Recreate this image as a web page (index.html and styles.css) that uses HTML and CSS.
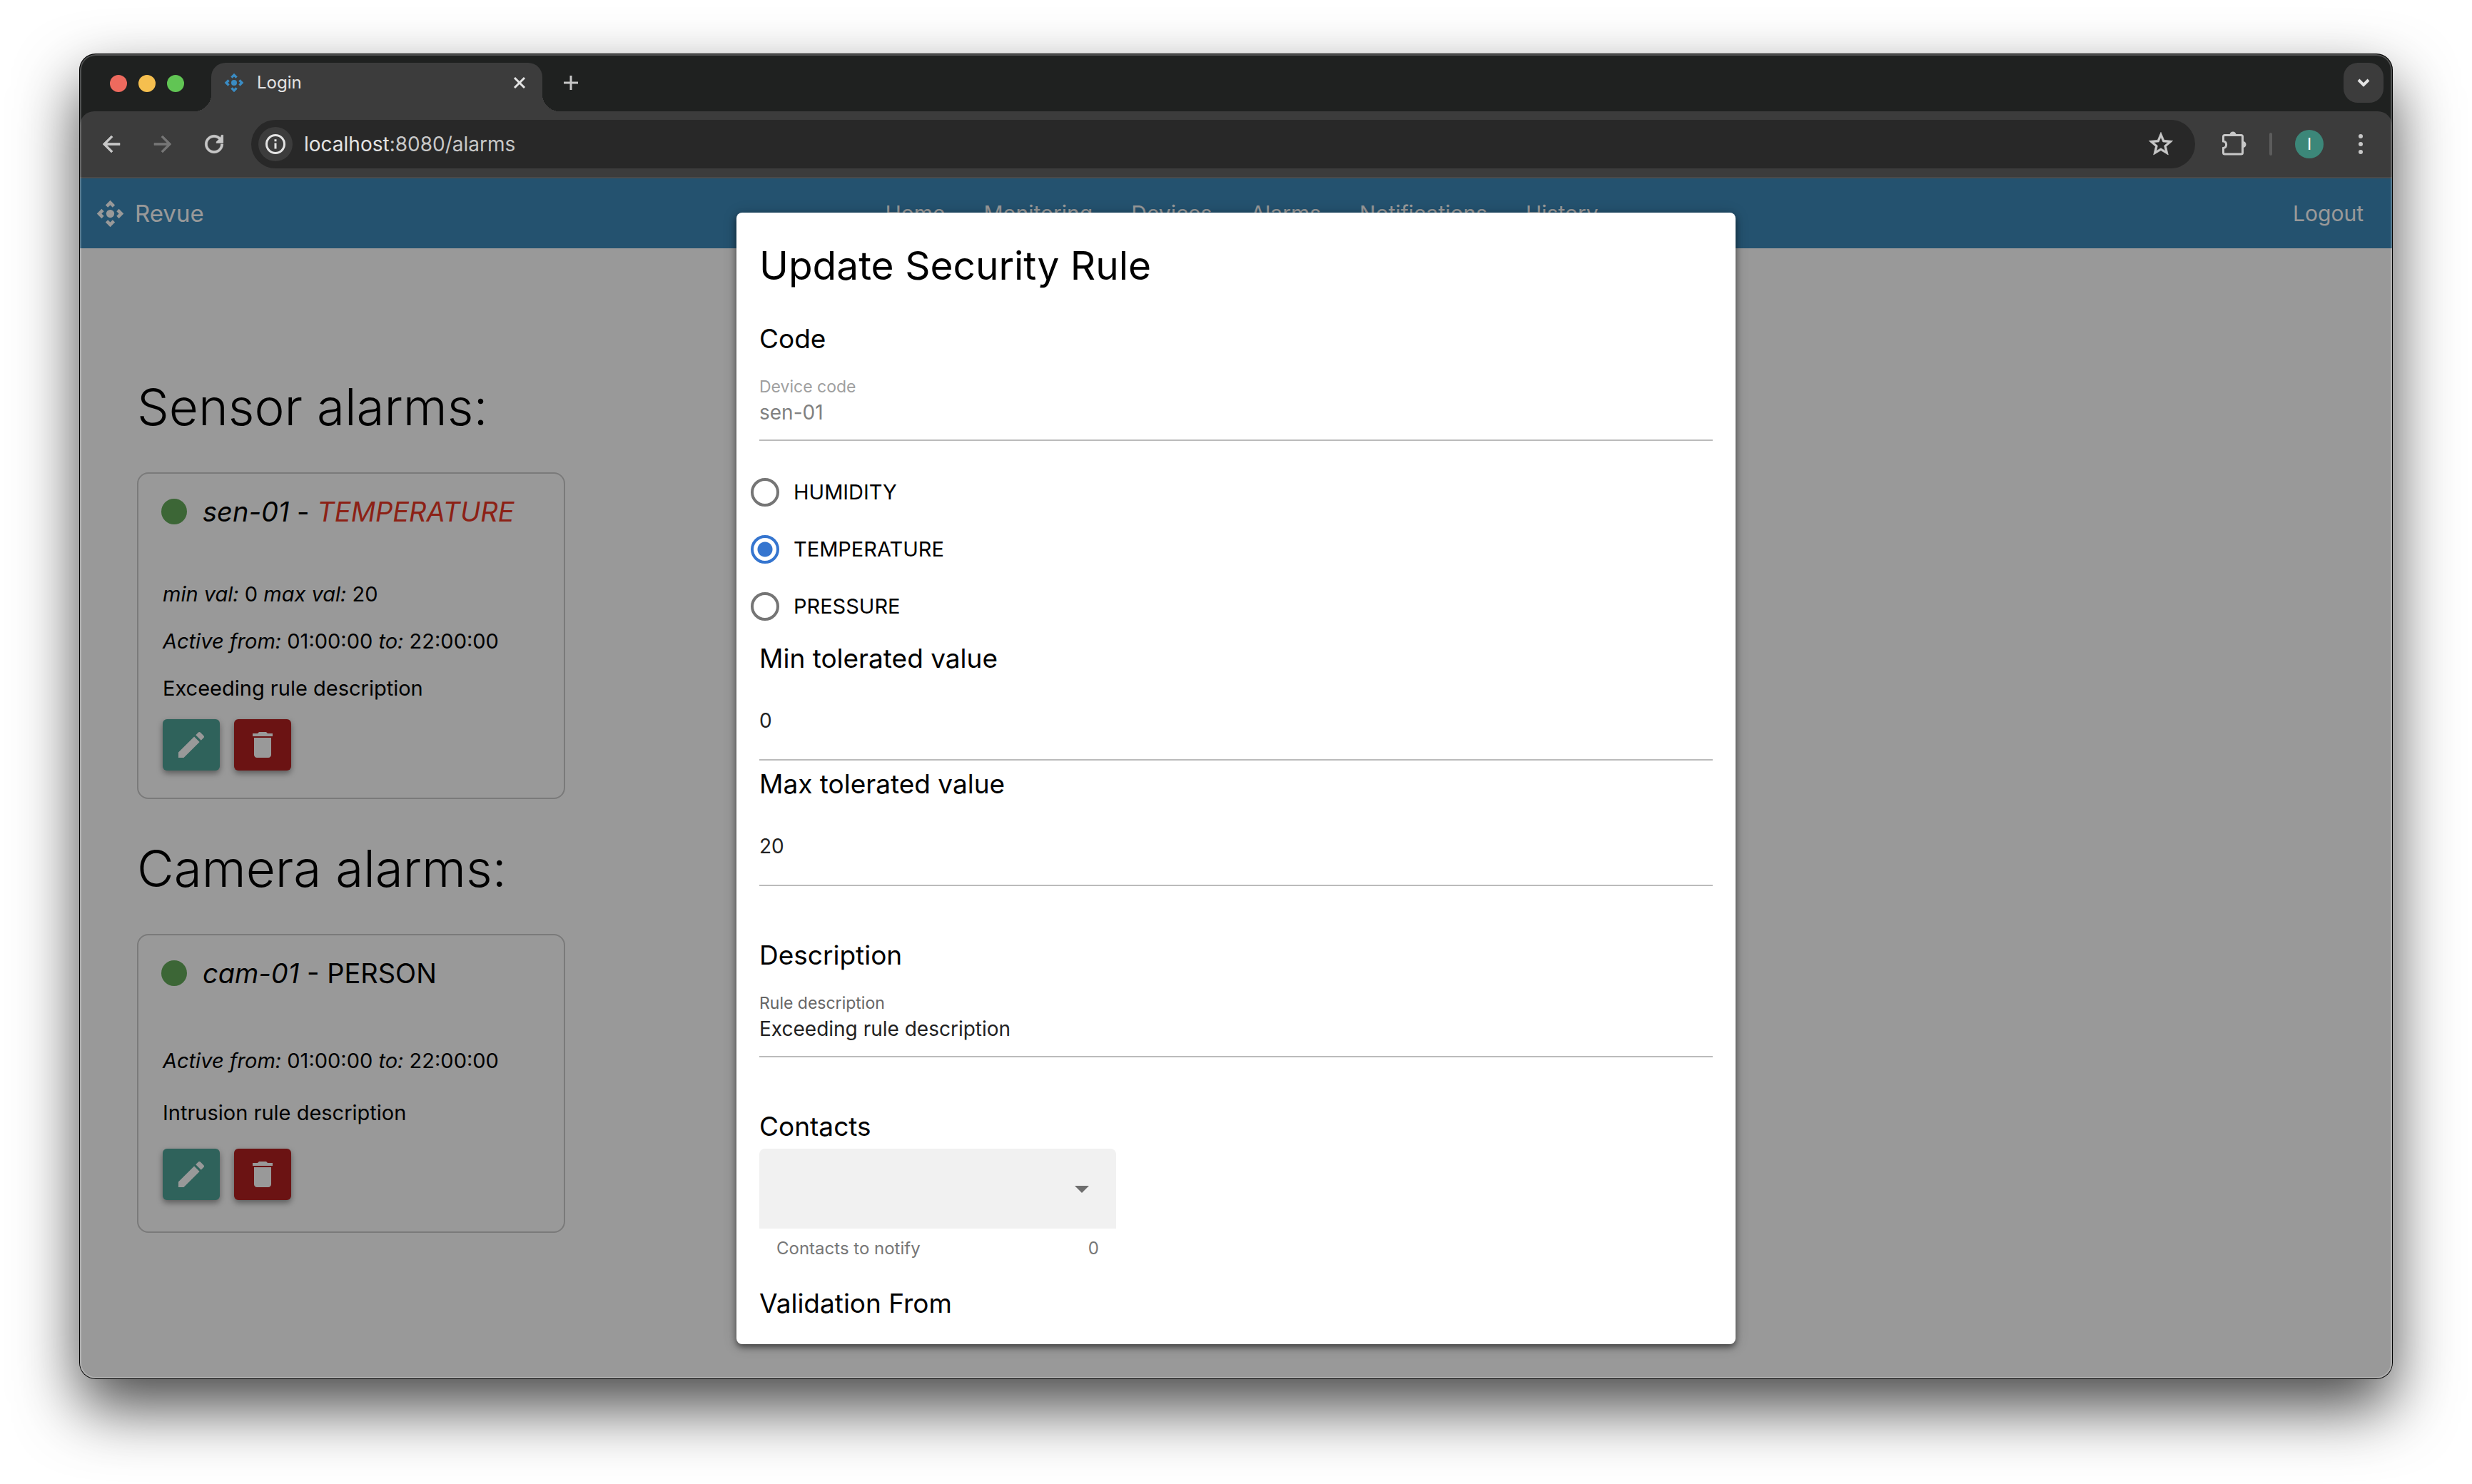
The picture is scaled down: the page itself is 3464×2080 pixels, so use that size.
FILE: index.html
```html
<!DOCTYPE html>
<html lang="en">
<head>
<meta charset="utf-8">
<title>Login</title>
<meta name="viewport" content="width=device-width, initial-scale=1">
<link rel="stylesheet" href="styles.css">
</head>
<body>
<svg class="sprite" aria-hidden="true">
  <symbol id="logo" viewBox="0 0 24 24"><path d="M15.54 5.54L13.77 7.3 12 5.54 10.23 7.3 8.46 5.54 12 2zm2.92 10l-1.76-1.77L18.46 12l-1.76-1.77 1.76-1.77L22 12zm-10 2.92l1.77-1.76L12 18.46l1.77-1.76 1.77 1.76L12 22zm-2.92-10l1.76 1.77L5.54 12l1.76 1.77-1.76 1.77L2 12z"/><circle cx="12" cy="12" r="3"/></symbol>
  <symbol id="edit" viewBox="0 0 24 24"><path d="M3 17.25V21h3.75L17.81 9.94l-3.75-3.75L3 17.25zM20.71 7.04c.39-.39.39-1.02 0-1.41l-2.34-2.34c-.39-.39-1.02-.39-1.41 0l-1.83 1.83 3.75 3.75 1.83-1.83z"/></symbol>
  <symbol id="trash" viewBox="0 0 24 24"><path d="M6 19c0 1.1.9 2 2 2h8c1.1 0 2-.9 2-2V7H6v12zM19 4h-3.5l-1-1h-5l-1 1H5v2h14V4z"/></symbol>
  <symbol id="arrow" viewBox="0 0 24 24"><path d="M20 11H7.83l5.59-5.59L12 4l-8 8 8 8 1.41-1.41L7.83 13H20v-2z"/></symbol>
</svg>

<div class="window">
  <header class="tabstrip">
    <div class="lights"><span class="light light-red"></span><span class="light light-yellow"></span><span class="light light-green"></span></div>
    <div class="tab">
      <svg class="favicon"><use href="#logo"/></svg>
      <span class="tab-title">Login</span>
      <button class="plain" aria-label="Close tab"><svg width="24" height="24" viewBox="0 0 24 24" class="line"><path d="M5 5l14 14M19 5L5 19"/></svg></button>
    </div>
    <button class="plain new-tab" aria-label="New tab"><svg width="24" height="24" viewBox="0 0 24 24" class="line"><path d="M12 2v20M2 12h20"/></svg></button>
    <button class="tab-search" aria-label="Search tabs"><svg width="24" height="24" viewBox="0 0 24 24" class="line line-thick"><path d="M5 8l7 7 7-7"/></svg></button>
  </header>

  <div class="toolbar">
    <button class="plain tool" aria-label="Back"><svg class="bold" width="36" height="36"><use href="#arrow"/></svg></button>
    <button class="plain tool tool-off" aria-label="Forward"><svg class="bold flip" width="36" height="36"><use href="#arrow"/></svg></button>
    <button class="plain tool" aria-label="Reload"><svg class="bold" width="38" height="38" viewBox="0 0 24 24"><path d="M17.65 6.35C16.2 4.9 14.21 4 12 4c-4.42 0-7.99 3.58-7.99 8s3.57 8 7.99 8c4.420 0 7.990-3.580 7.990-8h-2c0 3.310-2.680 6-5.990 6-3.31 0-6-2.69-6-6s2.69-6 6-6c1.66 0 3.140.69 4.220 1.780L14 10v1h6V4h-1.500z"/></svg></button>
    <div class="omnibox">
      <button class="plain site-info" aria-label="Site information"><svg width="32" height="32" viewBox="0 0 32 32" class="line"><circle cx="16" cy="16" r="12.5"/><path d="M16 14.5v8M16 9.200v3"/></svg></button>
      <div class="url"><span class="host">localhost</span>:8080/alarms</div>
      <button class="plain" aria-label="Bookmark"><svg class="bold" width="40" height="40" viewBox="0 0 24 24"><path d="M22 9.24l-7.19-.62L12 2 9.19 8.63 2 9.24l5.46 4.73L5.82 21 12 17.27 18.18 21l-1.63-7.03L22 9.24zM12 15.4l-3.76 2.27 1-4.28-3.32-2.88 4.38-.38L12 6.1l1.71 4.04 4.38.38-3.32 2.88 1 4.28L12 15.4z"/></svg></button>
    </div>
    <div class="tools-right">
      <button class="plain tool" aria-label="Extensions"><svg width="40" height="40" viewBox="0 0 40 40"><path class="line" d="M7.500 7.500h23a2 2 0 0 1 2 2V32a2 2 0 0 1-2 2H7.500a2 2 0 0 1-2-2v-6.500a4.800 4.800 0 0 0 0-9.500V9.500a2 2 0 0 1 2-2z"/><path d="M14.500 7a4.500 4.500 0 0 1 9 0zM33 16a4.500 4.500 0 0 1 0 9z"/></svg></button>
      <span class="divider"></span>
      <button class="plain avatar">I</button>
      <button class="plain tool" aria-label="Menu"><svg width="32" height="32" viewBox="0 0 32 32"><circle cx="16" cy="5" r="3"/><circle cx="16" cy="16" r="3"/><circle cx="16" cy="27" r="3"/></svg></button>
    </div>
  </div>

  <div class="viewport">
    <nav class="navbar">
      <a class="brand" href="#"><svg class="brand-logo"><use href="#logo"/></svg>Revue</a>
      <div class="links">
        <a href="#">Home</a><a href="#">Monitoring</a><a href="#">Devices</a><a href="#">Alarms</a><a href="#">Notifications</a><a href="#">History</a>
      </div>
      <a class="logout" href="#">Logout</a>
    </nav>

    <main class="page">
      <h1>Sensor alarms:</h1>
      <article class="card">
        <h2><span class="dot"></span><span><em>sen-01</em> - <em class="alert">TEMPERATURE</em></span></h2>
        <p><em>min val:</em> 0 <em>max val:</em> 20</p>
        <p><em>Active from:</em> 01:00:00 <em>to:</em> 22:00:00</p>
        <p>Exceeding rule description</p>
        <div class="actions">
          <button class="btn btn-edit" aria-label="Edit"><svg><use href="#edit"/></svg></button>
          <button class="btn btn-delete" aria-label="Delete"><svg><use href="#trash"/></svg></button>
        </div>
      </article>
      <h1>Camera alarms:</h1>
      <article class="card card-roomy">
        <h2><span class="dot"></span><span><em>cam-01</em> - PERSON</span></h2>
        <p><em>Active from:</em> 01:00:00 <em>to:</em> 22:00:00</p>
        <p>Intrusion rule description</p>
        <div class="actions">
          <button class="btn btn-edit" aria-label="Edit"><svg><use href="#edit"/></svg></button>
          <button class="btn btn-delete" aria-label="Delete"><svg><use href="#trash"/></svg></button>
        </div>
      </article>
    </main>

    <div class="backdrop">
      <form class="dialog" role="dialog" aria-labelledby="dialog-title">
        <h2 class="dialog-title" id="dialog-title">Update Security Rule</h2>
        <section class="group">
          <h3>Code</h3>
          <div class="field field-disabled">
            <label for="code">Device code</label>
            <input id="code" type="text" value="sen-01" disabled>
          </div>
        </section>
        <div class="radios">
          <label><input type="radio" name="kind">HUMIDITY</label>
          <label><input type="radio" name="kind" checked>TEMPERATURE</label>
          <label><input type="radio" name="kind">PRESSURE</label>
        </div>
        <section class="group group-tight">
          <h3><label for="min">Min tolerated value</label></h3>
          <div class="field field-bare"><input id="min" type="text" value="0"></div>
        </section>
        <section class="group group-tight">
          <h3><label for="max">Max tolerated value</label></h3>
          <div class="field field-bare"><input id="max" type="text" value="20"></div>
        </section>
        <section class="group group-loose">
          <h3>Description</h3>
          <div class="field">
            <label for="desc">Rule description</label>
            <input id="desc" type="text" value="Exceeding rule description">
          </div>
        </section>
        <section class="group group-loose">
          <h3>Contacts</h3>
          <div class="picker">
            <div class="select-box">
              <select id="contacts"><option></option></select>
              <svg class="caret" width="20" height="10" viewBox="0 0 20 10"><path d="M0 0h20L10 10z"/></svg>
            </div>
            <div class="helper"><label for="contacts">Contacts to notify</label><span>0</span></div>
          </div>
        </section>
        <section class="group">
          <h3>Validation From</h3>
        </section>
      </form>
    </div>
  </div>
</div>
</body>
</html>
```
FILE: styles.css
```css
* { box-sizing: border-box; }

body {
  margin: 0;
  min-height: 100vh;
  padding: 76px 112px 148px;
  display: flex;
  background: #fff;
  color: #000;
  font: 400 28px/36px Inter, "Liberation Sans", sans-serif;
}

h1, h2, h3, p { margin: 0; font-weight: 400; }
a { color: inherit; text-decoration: none; }
button, input, select { font: inherit; color: inherit; }
svg { display: block; fill: currentColor; }
.sprite { position: absolute; width: 0; height: 0; }
.line { fill: none; stroke: currentColor; stroke-width: 3; }
.line-thick { stroke-width: 4; }
.bold { stroke: currentColor; stroke-width: .4px; }
.flip { transform: scaleX(-1); }
.plain { border: 0; padding: 0; background: none; display: grid; place-items: center; }

/* Browser window */
.window {
  flex: 1;
  display: flex;
  flex-direction: column;
  position: relative;
  overflow: hidden;
  border-radius: 22px;
  background: #1f2120;
  box-shadow: 0 0 0 1px #000, 0 40px 88px rgba(0, 0, 0, .72);
}
.window::after {
  content: "";
  position: absolute;
  inset: 0;
  border-radius: 22px;
  box-shadow: inset 0 0 0 2px rgba(255, 255, 255, .22);
  pointer-events: none;
}

.tabstrip {
  display: flex;
  height: 80px;
  padding: 12px 12px 0 42px;
  color: #e3e3e3;
}
.lights { display: flex; gap: 16px; padding-top: 17px; width: 142px; }
.light { width: 24px; height: 24px; border-radius: 50%; }
.light-red { background: #ed6a5e; }
.light-yellow { background: #f5bf4f; }
.light-green { background: #61c554; }
.tab {
  position: relative;
  width: 464px;
  padding: 0 20px 12px 16px;
  display: flex;
  align-items: center;
  gap: 16px;
  border-radius: 20px 20px 0 0;
  background: #3c3c3c;
}
.tab::before, .tab::after {
  content: "";
  position: absolute;
  bottom: 0;
  width: 24px;
  height: 24px;
}
.tab::before { right: 100%; background: radial-gradient(circle at 0 0, transparent 24px, #3c3c3c 24px); }
.tab::after { left: 100%; background: radial-gradient(circle at 100% 0, transparent 24px, #3c3c3c 24px); }
.favicon { width: 32px; height: 32px; fill: #3a8cc4; }
.tab-title { flex: 1; font-size: 24px; }
.new-tab { width: 56px; height: 56px; margin-left: 12px; color: #c7c7c7; }
.tab-search {
  width: 56px;
  height: 56px;
  margin-left: auto;
  padding: 0;
  display: grid;
  place-items: center;
  border: 0;
  border-radius: 20px;
  background: #3c3c3c;
}

.toolbar {
  display: flex;
  align-items: center;
  height: 94px;
  padding: 0 8px;
  border-bottom: 2px solid #4a4a4a;
  border-radius: 20px 20px 0 0;
  background: #3c3c3c;
  color: #c7c7c7;
}
.tool { width: 72px; height: 68px; }
.tool-off { color: #757575; }
.omnibox {
  flex: 1;
  display: flex;
  align-items: center;
  height: 68px;
  margin-left: 16px;
  padding: 0 28px 0 10px;
  border-radius: 34px;
  background: #282828;
}
.site-info { width: 48px; height: 48px; border-radius: 50%; background: #3c3c3c; color: #e3e3e3; }
.url { flex: 1; padding-left: 16px; font-size: 28px; }
.host { color: #e3e3e3; }
.tools-right { display: flex; align-items: center; padding-left: 18px; }
.divider { width: 4px; height: 32px; margin-left: 14px; border-radius: 2px; background: #5c5c5c; }
.avatar { width: 40px; height: 40px; margin: 0 16px 0 32px; border-radius: 50%; background: #3c8779; color: #fff; font-size: 23px; }

/* Application */
.viewport { flex: 1; position: relative; background: #fff; }
.navbar {
  display: grid;
  grid-template-columns: 1fr auto 1fr;
  align-items: center;
  height: 98px;
  padding: 0 4px 0 20px;
  background: #3c89b9;
  color: #fff;
  font-size: 30px;
}
.brand { display: flex; align-items: center; gap: 12px; font-size: 33px; }
.brand-logo { width: 45px; height: 45px; }
.links { display: flex; gap: 54px; }
.logout { justify-self: end; margin-right: 36px; }

.page { padding: 173px 80px 100px; }
h1 { font-size: 71px; line-height: 98px; font-weight: 300; }
.card {
  width: 600px;
  margin: 43px 0 48px;
  padding: 29px 32px 38px;
  border: 2px solid #cbcbcb;
  border-radius: 16px;
}
.card h2 { display: flex; align-items: center; gap: 22px; font-size: 38px; line-height: 48px; margin-bottom: 74px; }
.card p { margin: 0 2px 30px; font-size: 29px; }
.card .actions { display: flex; gap: 20px; margin: -5px 2px 0; }
.card-roomy { padding-bottom: 44px; }
.card-roomy h2 { margin-bottom: 81px; }
.card-roomy p { margin-bottom: 37px; }
.dot { width: 36px; height: 36px; border-radius: 50%; background: #64aa5a; }
.alert { color: #e93726; }
.btn {
  width: 80px;
  height: 72px;
  padding: 0;
  display: grid;
  place-items: center;
  border: 0;
  border-radius: 6px;
  color: #fff;
  box-shadow: 0 4px 8px rgba(0, 0, 0, .4);
}
.btn svg { width: 48px; height: 48px; }
.btn-edit { background: #4fa398; }
.btn-delete { background: #b22120; }

/* Dialog */
.backdrop {
  position: absolute;
  inset: 0;
  padding: 48px;
  display: flex;
  justify-content: center;
  background: rgba(0, 0, 0, .4);
}
.dialog {
  width: 1400px;
  max-width: 100%;
  padding: 32px;
  overflow: hidden;
  border-radius: 8px;
  background: #fff;
  box-shadow: 0 4px 8px rgba(0, 0, 0, .5), 0 2px 20px rgba(0, 0, 0, .2);
}
.dialog-title { font-size: 55px; line-height: 84px; }
.group { margin-top: 37px; }
.group-tight { margin-top: 9px; }
.group-loose { margin-top: 73px; }
h3 { font-size: 37px; line-height: 48px; }
.field { height: 119px; padding-top: 27px; border-bottom: 2px solid #bbb; }
.field label { display: block; font-size: 23px; line-height: 32px; color: #666; }
.field input {
  display: block;
  width: 100%;
  height: 40px;
  padding: 0;
  border: 0;
  background: none;
  color: #222;
  font-size: 28px;
}
.field-bare { padding-top: 43px; }
.field-disabled label { color: #9f9f9f; }
.field-disabled input { color: #808080; }
.radios { margin-top: 32px; }
.radios label { display: flex; align-items: center; gap: 20px; height: 80px; margin-left: -12px; font-size: 29px; }
.radios input {
  appearance: none;
  width: 40px;
  height: 40px;
  margin: 0;
  border: 4px solid #757575;
  border-radius: 50%;
}
.radios input:checked { border-color: #3575cf; background: radial-gradient(circle, #3575cf 10px, transparent 11px); }
.picker { width: 500px; padding-top: 7px; }
.select-box { position: relative; }
.select-box select {
  display: block;
  appearance: none;
  width: 100%;
  height: 112px;
  border: 0;
  border-radius: 8px 8px 0 0;
  background: #f1f1f1;
}
.caret { position: absolute; right: 38px; top: 52px; fill: #6e6e6e; pointer-events: none; }
.helper { display: flex; justify-content: space-between; padding: 12px 24px 0; font-size: 24px; line-height: 32px; color: #777; }
```
